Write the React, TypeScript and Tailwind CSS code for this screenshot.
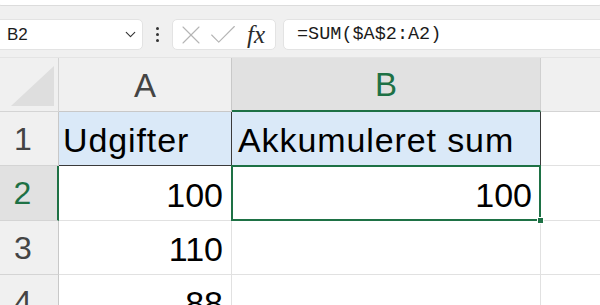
import { Check, ChevronDown, X } from "lucide-react";

const GREEN = "#1e7145";

function Toolbar() {
  return (
    <div className="mt-[13px] flex h-[31px] items-stretch">
      <div className="-ml-[8px] flex w-[151px] items-center justify-between rounded-[5px] border border-[#e3e3e3] bg-white pl-[14px] pr-[3px]">
        <span className="text-[17px] text-[#1b1b1b]">B2</span>
        <ChevronDown className="h-[17px] w-[17px] text-[#333]" strokeWidth={1.6} />
      </div>
      <div className="flex w-[29px] flex-col items-center justify-center gap-[3px]">
        <span className="h-[3px] w-[3px] rounded-full bg-[#333]" />
        <span className="h-[3px] w-[3px] rounded-full bg-[#333]" />
        <span className="h-[3px] w-[3px] rounded-full bg-[#333]" />
      </div>
      <div className="flex w-[104px] items-center overflow-hidden rounded-[5px] border border-[#e3e3e3] bg-white pl-[3px]">
        <X className="-ml-[1px] h-[32px] w-[32px] shrink-0 text-[#b5b5b5]" strokeWidth={0.8} />
        <Check className="-ml-[1px] h-[34px] w-[34px] shrink-0 text-[#b5b5b5]" strokeWidth={0.8} />
        <span className="ml-[7px] font-['Liberation_Serif'] text-[25px] italic leading-none text-[#2b2b2b]">
          fx
        </span>
      </div>
      <div className="ml-[7px] -mr-[8px] flex flex-1 items-center rounded-[5px] border border-[#e3e3e3] bg-white pl-[13px]">
        <span className="font-['Liberation_Mono'] text-[18.5px] text-[#1b1b1b]">=SUM($A$2:A2)</span>
      </div>
    </div>
  );
}

function RowHeader({ n, selected }: { n: number; selected?: boolean }) {
  return (
    <div
      className={`flex w-[59px] shrink-0 items-center justify-center border-b pr-[12px] text-[32px] ${
        selected
          ? "border-r-2 border-b-[#d4d4d4] border-r-[#1e7145] bg-[#e1e1e1] text-[#1e7145]"
          : "border-r border-b-[#d4d4d4] border-r-[#c8c8c8] bg-[#f0f0f0] text-[#444]"
      }`}
    >
      {n}
    </div>
  );
}

function NumCell({ value, width }: { value?: string; width: string }) {
  return (
    <div
      className={`flex ${width} shrink-0 items-end justify-end border-r border-b border-[#e1e1e1] bg-white pr-[8px] pb-[8px] text-[34px] leading-none text-black`}
    >
      {value}
    </div>
  );
}

export default function App() {
  return (
    <div className="h-[305px] w-[600px] overflow-hidden bg-[#f0f0f0] font-['Liberation_Sans',sans-serif]">
      <div className="-mx-[4px] h-[6px] rounded-b-[8px] border-b border-[#dcdcdc] bg-white" />
      <Toolbar />

      <div className="mt-[7px] flex flex-col">
        {/* column headers */}
        <div className="flex h-[55px] border-t border-[#e4e4e4]">
          <div className="flex w-[59px] shrink-0 items-end justify-end border-r border-b border-[#d4d4d4] pr-[4px] pb-[5px]">
            <svg width="43" height="40" viewBox="0 0 43 40">
              <polygon points="43,0 43,40 0,40" fill="#dedede" />
            </svg>
          </div>
          <div className="flex w-[173px] shrink-0 items-center justify-center border-r border-b border-[#c8c8c8] pt-[2px] text-[33px] text-[#444]">
            A
          </div>
          <div
            className="flex w-[309px] shrink-0 items-center justify-center border-r border-b-2 border-r-[#d0d0d0] bg-[#e1e1e1] pt-[2px] text-[33px]"
            style={{ borderBottomColor: GREEN, color: GREEN }}
          >
            B
          </div>
          <div className="flex-1 border-b border-[#d4d4d4]" />
        </div>

        {/* row 1 */}
        <div className="flex h-[54px]">
          <RowHeader n={1} />
          <div className="flex w-[173px] shrink-0 items-end border-r border-b border-[#3a3a3a] bg-[#dae9f8] pl-[4px] pb-[8px] text-[34px] leading-none tracking-[0.9px] text-black">
            Udgifter
          </div>
          <div className="flex w-[309px] shrink-0 items-end border-r border-b border-[#3a3a3a] bg-[#dae9f8] pl-[6px] pb-[8px] text-[34px] leading-none tracking-[0.9px] text-black">
            Akkumuleret sum
          </div>
          <div className="flex-1 border-b border-[#e1e1e1] bg-white" />
        </div>

        {/* row 2 */}
        <div className="flex h-[55px]">
          <RowHeader n={2} selected />
          <NumCell value="100" width="w-[173px]" />
          <div className="relative flex w-[309px] shrink-0 items-end justify-end border-r border-b border-[#e1e1e1] bg-white pr-[8px] pb-[8px] text-[34px] leading-none text-black">
            100
            <div
              className="pointer-events-none absolute -top-[1px] -left-[1px] -right-[1px] -bottom-[1px] border-2"
              style={{ borderColor: GREEN }}
            />
            <div
              className="absolute -right-[4px] -bottom-[4px] h-[7px] w-[7px] border border-white"
              style={{ backgroundColor: GREEN }}
            />
          </div>
          <div className="flex-1 border-b border-[#e1e1e1] bg-white" />
        </div>

        {/* row 3 */}
        <div className="flex h-[54px]">
          <RowHeader n={3} />
          <NumCell value="110" width="w-[173px]" />
          <NumCell width="w-[309px]" />
          <div className="flex-1 border-b border-[#e1e1e1] bg-white" />
        </div>

        {/* row 4 */}
        <div className="flex h-[54px]">
          <RowHeader n={4} />
          <NumCell value="88" width="w-[173px]" />
          <NumCell width="w-[309px]" />
          <div className="flex-1 border-b border-[#e1e1e1] bg-white" />
        </div>
      </div>
    </div>
  );
}
